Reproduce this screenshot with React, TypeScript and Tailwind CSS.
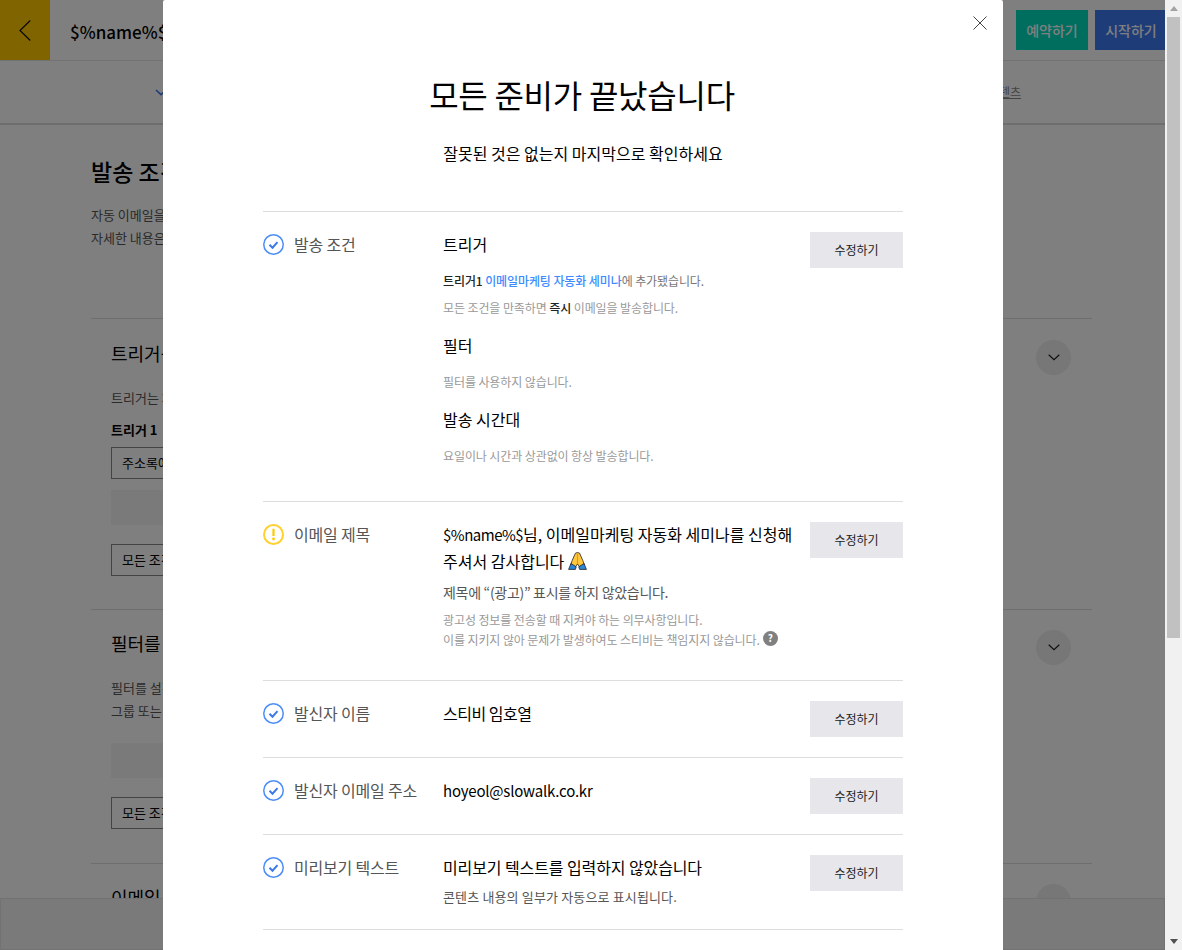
import React from "react";

const font = { fontFamily: '"Noto Sans CJK KR", "Noto Sans", sans-serif' };

function Check() {
  return (
    <svg width="21" height="21" viewBox="0 0 21 21" fill="none" className="shrink-0">
      <circle cx="10.5" cy="10.5" r="9.75" stroke="#4b8df8" strokeWidth="1.5" />
      <path d="M6.5 10.8l3 2.9 5-5.6" stroke="#3b7ae8" strokeWidth="2" />
    </svg>
  );
}
function Warn() {
  return (
    <svg width="21" height="21" viewBox="0 0 21 21" fill="none" className="shrink-0">
      <circle cx="10.5" cy="10.5" r="9.5" stroke="#ffd02e" strokeWidth="2" />
      <path d="M10.5 4.8v7.2" stroke="#ffc800" strokeWidth="2.2" />
      <circle cx="10.5" cy="15" r="1.4" fill="#ffc800" />
    </svg>
  );
}
function Pray() {
  return (
    <svg width="19" height="18" viewBox="0 0 19 18" className="inline-block align-[-2px]">
      <path d="M9.5 .5 L7.4 1.2 L4.2 8.5 L2.5 13 L7 15.5 L9.5 12 L12 15.5 L16.5 13 L14.8 8.5 L11.6 1.2 Z" fill="#ffc83d" stroke="#222" strokeWidth=".8" />
      <path d="M9.5 1.5V12" stroke="#e8961e" strokeWidth="1.2" />
      <path d="M.6 17.4 L3 11.5 L8.2 14.8 L7.4 17.4 Z" fill="#2a86d8" stroke="#222" strokeWidth=".8" />
      <path d="M18.4 17.4 L16 11.5 L10.8 14.8 L11.6 17.4 Z" fill="#2a86d8" stroke="#222" strokeWidth=".8" />
    </svg>
  );
}
function Chevron() {
  return (
    <div className="w-[35px] h-[35px] rounded-full bg-[#eeeeee] flex items-center justify-center shrink-0">
      <svg width="12" height="7" viewBox="0 0 12 7" fill="none"><path d="M.7.7L6 5.7 11.3.7" stroke="#222" strokeWidth="1.2" /></svg>
    </div>
  );
}

function Row({ icon, label, children, className = "" }: { icon: React.ReactNode; label: string; children: React.ReactNode; className?: string }) {
  return (
    <div className={"flex border-t border-[#dddddd] pt-5 " + className}>
      <div className="w-[180px] shrink-0 flex items-start gap-2.5 pt-[2px]">
        {icon}
        <span className="text-[16px] leading-[21px] text-[#555555] tracking-[-0.2px]">{label}</span>
      </div>
      <div className="w-[350px] shrink-0 -mt-px">{children}</div>
      <button className="ml-auto w-[93px] h-9 bg-[#e6e6eb] text-[12px] text-[#222222] shrink-0">수정하기</button>
    </div>
  );
}

function Section({ title, circleClass, children, border = true }: { title: string; circleClass: string; children?: React.ReactNode; border?: boolean }) {
  return (
    <section className={"relative pl-5 pr-[21px] " + (border ? "border-t border-[#dddddd]" : "")}>
      <div className={"flex items-start justify-between " + circleClass}>
        <h3 className="text-[18px] leading-[26px] text-black">{title}</h3>
        <Chevron />
      </div>
      {children}
    </section>
  );
}

export default function App() {
  return (
    <div style={font} className="relative h-[950px] w-full overflow-hidden flex bg-white">
      <div className="flex-1 min-w-0 h-full relative flex flex-col">
        <header className="h-[61px] shrink-0 flex items-start border-b border-[#e4e4e4]">
          <div className="w-[50px] h-[60px] bg-[#ffc800] flex items-center justify-center">
            <svg width="12" height="21" viewBox="0 0 12 21" fill="none"><path d="M11.3.5L1 10.5l10.3 10" stroke="#111" strokeWidth="1.2" /></svg>
          </div>
          <div className="ml-5 h-[60px] pt-[4px] flex items-center text-[17px] font-medium text-black">$%name%$님, 이메일마케팅</div>
          <div className="ml-auto flex gap-[7px] pt-2.5">
            <button className="w-[72px] h-10 bg-[#00dcbe] text-white text-[14px] font-medium">예약하기</button>
            <button className="w-[70px] h-10 pl-[2px] bg-[#3c78f0] text-white text-[14px] font-medium">시작하기</button>
          </div>
        </header>
        <nav className="h-[64px] shrink-0 border-b-2 border-[#dddddd] relative flex items-center pl-[155px]">
          <svg width="12" height="7" viewBox="0 0 12 7" fill="none"><path d="M1 1l5 4.6L11 1" stroke="#3c78f0" strokeWidth="1.6" /></svg>
          <span className="ml-auto mr-[144px] text-[12px] text-[#888888] underline">콘텐츠</span>
        </nav>
        <main className="flex-1 min-h-0 overflow-hidden pl-[91px] pr-[73px]">
          <h2 className="mt-[30px] text-[23px] leading-[32px] font-medium text-black">발송 조건</h2>
          <p className="mt-[16px] text-[13px] leading-[23px] text-[#555555]">자동 이메일을 발송할 조건을 설정하세요.<br />자세한 내용은 도움말을 확인하세요.</p>
          <div className="mt-[69px]">
            <Section title="트리거를 설정하세요" circleClass="pt-[21px]">
              <p className="mt-[13px] text-[13px] leading-[20px] text-[#555555]">트리거는 자동 이메일을 발송하는 조건입니다.</p>
              <p className="mt-[12px] text-[13px] leading-[20px] font-bold text-black">트리거 1</p>
              <div className="mt-[7px] w-[300px] h-8 border border-[#888888] px-[10px] text-[13px] leading-[30px] text-black">주소록에 추가됨</div>
              <div className="mt-[11px] w-[600px] h-[35px] bg-[#f5f5f5]" />
              <div className="mt-[19px] w-[300px] h-8 border border-[#888888] px-[10px] text-[13px] leading-[30px] text-black">모든 조건을 만족</div>
              <div className="h-[33px]" />
            </Section>
            <Section title="필터를 설정하세요" circleClass="pt-[20px]">
              <p className="mt-[11px] text-[13px] leading-[23px] text-[#555555]">필터를 설정하면 발송 대상을 제한합니다.<br />그룹 또는 조건을 선택하세요.</p>
              <div className="mt-[21px] w-[600px] h-[35px] bg-[#f5f5f5]" />
              <div className="mt-[19px] w-[300px] h-8 border border-[#888888] px-[10px] text-[13px] leading-[30px] text-black">모든 조건을 만족</div>
              <div className="h-[34px]" />
            </Section>
            <Section title="이메일 발송" circleClass="pt-[20px]" />
          </div>
        </main>
        <footer className="h-[52px] shrink-0 bg-[#f5f5f5] border border-[#e4e4e4]" />
        <div className="absolute inset-0 bg-black/50" />
        <div className="absolute left-[163px] top-0 bottom-0 w-[840px] bg-white px-[100px] rounded-t-[2px] overflow-hidden">
          <button className="absolute right-[16px] top-[16px]">
            <svg width="14" height="14" viewBox="0 0 14 14" fill="none"><path d="M.5.5l13 13M13.5.5l-13 13" stroke="#444" strokeWidth="1" /></svg>
          </button>
          <h1 className="mt-[69px] pr-[2px] text-center text-[32px] leading-[50px] tracking-[-0.25px] text-black">모든 준비가 끝났습니다</h1>
          <p className="mt-[22px] text-center text-[16px] leading-[24px] text-black">잘못된 것은 없는지 마지막으로 확인하세요</p>
          <div className="mt-[46px]">
            <Row icon={<Check />} label="발송 조건" className="h-[290px]">
              <div className="text-[16px] leading-[26px] text-black">트리거</div>
              <p className="mt-[14px] text-[12px] leading-[20px] tracking-[-0.1px] text-[#777777]"><span className="text-[#222222] font-medium">트리거1</span> <span className="text-[#3d8bff] font-medium">이메일마케팅 자동화 세미나</span>에 추가됐습니다.</p>
              <p className="mt-[7px] text-[12px] leading-[20px] tracking-[-0.1px] text-[#999999]">모든 조건을 만족하면 <span className="text-[#222222] font-medium">즉시</span> 이메일을 발송합니다.</p>
              <div className="mt-[14px] text-[16px] leading-[26px] text-black">필터</div>
              <p className="mt-[14px] text-[12px] leading-[20px] tracking-[-0.1px] text-[#999999]">필터를 사용하지 않습니다.</p>
              <div className="mt-[14px] text-[16px] leading-[26px] text-black">발송 시간대</div>
              <p className="mt-[14px] text-[12px] leading-[20px] tracking-[-0.1px] text-[#999999]">요일이나 시간과 상관없이 항상 발송합니다.</p>
            </Row>
            <Row icon={<Warn />} label="이메일 제목" className="h-[179px]">
              <div className="text-[16px] leading-[26px] text-black"><span className="text-[15px] tracking-[-0.5px]">$%name%$</span>님, 이메일마케팅 자동화 세미나를 신청해 주셔서 감사합니다 <Pray /></div>
              <p className="mt-[8px] text-[14px] leading-[20px] tracking-[-0.3px] text-[#555555]">제목에 “(광고)” 표시를 하지 않았습니다.</p>
              <p className="mt-[8px] text-[12px] leading-[20px] tracking-[-0.1px] text-[#999999]">광고성 정보를 전송할 때 지켜야 하는 의무사항입니다.<br />이를 지키지 않아 문제가 발생하여도 스티비는 책임지지 않습니다.
                <span className="relative -top-[3px] ml-[3px] inline-flex w-[15px] h-[15px] rounded-full bg-[#808080] text-white text-[10px] font-bold items-center justify-center">?</span>
              </p>
            </Row>
            <Row icon={<Check />} label="발신자 이름" className="h-[77px]">
              <div className="text-[16px] leading-[26px] tracking-[-0.5px] text-black">스티비 임호열</div>
            </Row>
            <Row icon={<Check />} label="발신자 이메일 주소" className="h-[77px]">
              <div className="pt-px text-[15px] leading-[26px] tracking-[-0.2px] text-black">hoyeol@slowalk.co.kr</div>
            </Row>
            <Row icon={<Check />} label="미리보기 텍스트" className="h-[95px]">
              <div className="text-[16px] leading-[26px] tracking-[-0.1px] text-black">미리보기 텍스트를 입력하지 않았습니다</div>
              <p className="mt-[7px] text-[13px] leading-[20px] tracking-[0.15px] text-[#555555]">콘텐츠 내용의 일부가 자동으로 표시됩니다.</p>
            </Row>
            <div className="border-t border-[#dddddd]" />
          </div>
        </div>
      </div>
      <aside className="w-[17px] shrink-0 h-full bg-[#f1f1f1] flex flex-col">
        <div className="h-[17px] flex items-center justify-center">
          <svg width="8" height="5" viewBox="0 0 8 5"><path d="M4 0l4 5H0z" fill="#a3a3a3" /></svg>
        </div>
        <div className="mx-[2px] w-[13px] h-[621px] bg-[#c1c1c1]" />
        <div className="flex-1" />
        <div className="h-[17px] flex items-center justify-center">
          <svg width="8" height="5" viewBox="0 0 8 5"><path d="M0 0h8L4 5z" fill="#505050" /></svg>
        </div>
      </aside>
    </div>
  );
}
